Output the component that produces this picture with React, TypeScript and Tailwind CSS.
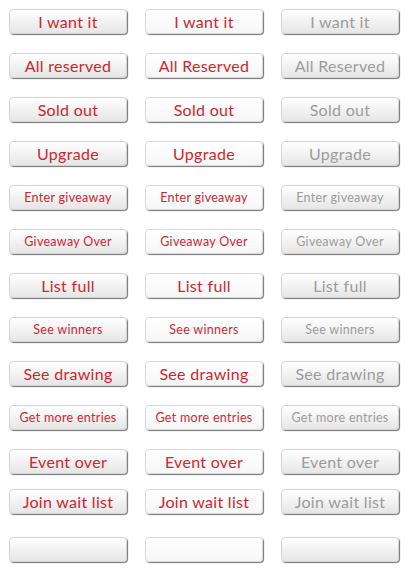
import clsx from 'clsx';

type Row = {
  labels: [string, string, string];
  small?: boolean;
  className?: string;
};

const rows: Row[] = [
  { labels: ['I want it', 'I want it', 'I want it'] },
  { labels: ['All reserved', 'All Reserved', 'All Reserved'] },
  { labels: ['Sold out', 'Sold out', 'Sold out'] },
  { labels: ['Upgrade', 'Upgrade', 'Upgrade'] },
  { labels: ['Enter giveaway', 'Enter giveaway', 'Enter giveaway'], small: true },
  { labels: ['Giveaway Over', 'Giveaway Over', 'Giveaway Over'], small: true },
  { labels: ['List full', 'List full', 'List full'] },
  { labels: ['See winners', 'See winners', 'See winners'], small: true },
  { labels: ['See drawing', 'See drawing', 'See drawing'] },
  { labels: ['Get more entries', 'Get more entries', 'Get more entries'], small: true },
  { labels: ['Event over', 'Event over', 'Event over'] },
  { labels: ['Join wait list', 'Join wait list', 'Join wait list'], className: '-mt-[4px]' },
  { labels: ['', '', ''], className: 'mt-[4px]' },
];

type Variant = 'normal' | 'white' | 'disabled';

const variants: Variant[] = ['normal', 'white', 'disabled'];

const StateButton = ({
  label,
  small,
  variant,
}: {
  label: string;
  small?: boolean;
  variant: Variant;
}) => {
  return (
    <button
      type="button"
      className={clsx(
        'h-[25px] w-[118px] rounded-[4px] border flex items-center justify-center pt-[1px] leading-none tracking-[0.3px] shadow-[1px_1px_1px_rgba(0,0,0,0.55)]',
        small ? 'text-[12.5px]' : 'text-[16px]',
        variant === 'normal' && 'border-[#d4d4d4] bg-gradient-to-b from-white to-[#e6e6e6] text-[#cf262d]',
        variant === 'white' && 'border-[#d8d8d8] bg-gradient-to-b from-white to-[#f7f7f7] text-[#cf262d]',
        variant === 'disabled' && 'border-[#d4d4d4] bg-gradient-to-b from-white to-[#e6e6e6] text-[#9c9c9c]'
      )}
    >
      {label}
    </button>
  );
};

const App = () => {
  return (
    <div
      className="w-[408px] h-[572px] bg-white pt-[9px] pl-[9px] flex flex-col gap-[19px]"
      style={{ fontFamily: 'Lato, "Open Sans", sans-serif' }}
    >
      {rows.map((row, i) => (
        <div key={i} className={clsx('flex gap-[18px]', row.className)}>
          {row.labels.map((label, j) => (
            <StateButton
              key={j}
              label={label}
              small={row.small}
              variant={variants[j]}
            />
          ))}
        </div>
      ))}
    </div>
  );
};

export default App;
